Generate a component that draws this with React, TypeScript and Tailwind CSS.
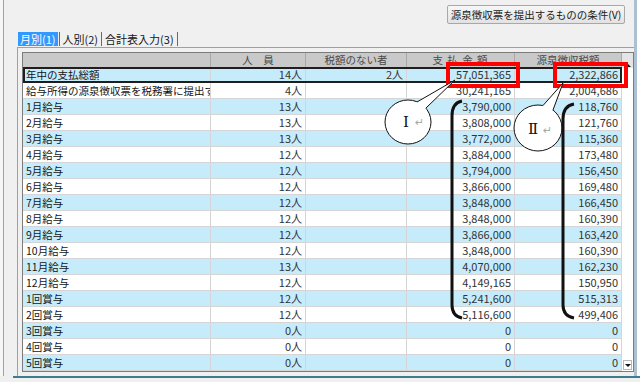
type Row = [string, string, string, string, string]

const rows: Row[] = [
  ["年中の支払総額", "14人", "2人", "57,051,365", "2,322,866"],
  ["給与所得の源泉徴収票を税務署に提出する者", "4人", "", "30,241,165", "2,004,686"],
  ["1月給与", "13人", "", "3,790,000", "118,760"],
  ["2月給与", "13人", "", "3,808,000", "121,760"],
  ["3月給与", "13人", "", "3,772,000", "115,360"],
  ["4月給与", "12人", "", "3,884,000", "173,480"],
  ["5月給与", "12人", "", "3,794,000", "156,450"],
  ["6月給与", "12人", "", "3,866,000", "169,480"],
  ["7月給与", "12人", "", "3,848,000", "166,450"],
  ["8月給与", "12人", "", "3,848,000", "160,390"],
  ["9月給与", "12人", "", "3,866,000", "163,420"],
  ["10月給与", "12人", "", "3,848,000", "160,390"],
  ["11月給与", "13人", "", "4,070,000", "162,230"],
  ["12月給与", "12人", "", "4,149,165", "150,950"],
  ["1回賞与", "12人", "", "5,241,600", "515,313"],
  ["2回賞与", "12人", "", "5,116,600", "499,406"],
  ["3回賞与", "0人", "", "0", "0"],
  ["4回賞与", "0人", "", "0", "0"],
  ["5回賞与", "0人", "", "0", "0"],
]

function HeaderRow() {
  const cell = "shrink-0 h-full border-r border-[#a9a9a9] text-center text-[10.5px] leading-[14px] text-[#4a4a4a]"
  return (
    <div className="flex h-[14px] bg-[#c9c9c9]">
      <div className={`${cell} w-[188px]`} />
      <div className={`${cell} w-[95px]`}>人　員</div>
      <div className={`${cell} w-[101px]`}>税額のない者</div>
      <div className={`${cell} w-[108px] tracking-[1px]`}>支 払 金 額</div>
      <div className={`${cell} w-[107px]`}>源泉徴収税額</div>
    </div>
  )
}

function DataRow({ row, index }: { row: Row; index: number }) {
  const [label, people, noTax, paid, tax] = row
  const num = "shrink-0 h-full border-r border-[#d5d5d5] text-right pr-[3px] text-[11px] leading-[15px] text-[#333]"
  return (
    <div
      className={`flex h-[16px] border-b border-[#d5d5d5] ${index % 2 === 0 ? "bg-[#c6ecfc]" : "bg-white"} ${
        index === 0 ? "outline-2 -outline-offset-2 outline-[#1e1e1e]" : ""
      }`}
    >
      <div className="w-[188px] shrink-0 h-full border-r border-[#d5d5d5] pl-[3px] overflow-hidden whitespace-nowrap text-[10.5px] leading-[15px] text-[#161616]">
        {label}
      </div>
      <div className={`${num} w-[95px]`}>{people}</div>
      <div className={`${num} w-[101px]`}>{noTax}</div>
      <div className={`${num} w-[108px]`}>{paid}</div>
      <div className={`${num} w-[107px]`}>{tax}</div>
    </div>
  )
}

function Annotations() {
  return (
    <svg className="absolute left-0 top-0 pointer-events-none" width="640" height="382" viewBox="0 0 640 382">
      <rect x="448" y="64" width="70" height="22" fill="none" stroke="#ff0000" strokeWidth="4" />
      <rect x="555" y="64" width="71" height="22" fill="none" stroke="#ff0000" strokeWidth="4" />

      <ellipse cx="408" cy="122" rx="23" ry="22" fill="white" stroke="#111" strokeWidth="1" />
      <path d="M417 102 L455 80 L426 108 L415 112 Z" fill="white" />
      <path d="M417 102 L455 80 L426 108" fill="none" stroke="#111" strokeWidth="1" />
      <text x="403" y="127" fontFamily="'DejaVu Serif', 'Liberation Serif', serif" fontSize="15" fill="#111">
        Ⅰ
      </text>
      <text x="415" y="126" fontFamily="'DejaVu Sans', sans-serif" fontSize="11" fill="#a8a8a8">
        ↵
      </text>

      <ellipse cx="538" cy="128" rx="24" ry="23" fill="white" stroke="#111" strokeWidth="1" />
      <path d="M543 105.5 L563 83 L553 110 L545 115 Z" fill="white" />
      <path d="M543 105.5 L563 83 L553 110" fill="none" stroke="#111" strokeWidth="1" />
      <text x="528" y="134" fontFamily="'DejaVu Serif', 'Liberation Serif', serif" fontSize="15" fill="#111">
        Ⅱ
      </text>
      <text x="543" y="134" fontFamily="'DejaVu Sans', sans-serif" fontSize="11" fill="#a8a8a8">
        ↵
      </text>

      <path d="M462 101 Q452 103 452 116 L452 305 Q452 316 462 318" fill="none" stroke="#111" strokeWidth="3" />
      <path d="M574 104 Q563 106 563 119 L563 305 Q563 316 574 318" fill="none" stroke="#111" strokeWidth="3" />
    </svg>
  )
}

export default function App() {
  return (
    <div className="relative w-[640px] h-[382px] overflow-hidden bg-[#f0f0f0] font-['Noto_Sans_CJK_JP','Noto_Sans',sans-serif] text-[#161616]">
      <div className="flex h-[376px]">
        <div className="w-[3px] shrink-0 bg-[#f6f6f6]" />
        <div className="flex-1 flex flex-col border-l border-[#a3a3a3] border-r-[3px] border-r-[#abc0d0]">
          {/* top toolbar */}
          <div className="h-[31px] shrink-0 flex justify-end items-start pt-[5px] pr-[9px]">
            <button className="w-[178px] h-[19px] border border-[#a8a8a8] rounded-[2px] bg-gradient-to-b from-[#f7f7f7] to-[#e2e2e2] text-[10.5px] leading-[17px] text-[#222] whitespace-nowrap">
              源泉徴収票を提出するものの条件(V)
            </button>
          </div>

          {/* tabs */}
          <div className="h-[16px] shrink-0 flex items-start pl-[14px] pt-[1px] text-[11px] leading-[14px]">
            <div className="h-[14px] px-[2px] bg-[#3399ff] text-white">月別(1)</div>
            <div className="w-px h-[14px] bg-[#6a6a6a] ml-[1px]" />
            <div className="h-[14px] px-[3px]">人別(2)</div>
            <div className="w-px h-[14px] bg-[#6a6a6a]" />
            <div className="h-[14px] px-[3px]">合計表入力(3)</div>
            <div className="w-px h-[14px] bg-[#6a6a6a]" />
          </div>

          {/* panel */}
          <div className="flex-1 ml-[13px] border-l border-t border-[#a0a0a0] pl-[4px] pt-[4px]">
            <div className="flex h-[320px] border border-[#7c7c7c] bg-white">
              <div className="flex flex-col">
                <HeaderRow />
                {rows.map((row, i) => (
                  <DataRow key={row[0]} row={row} index={i} />
                ))}
              </div>
              {/* scrollbar */}
              <div className="flex-1 flex flex-col bg-white">
                <div className="h-[15px] bg-[#e4e4e4] flex items-end justify-center pb-[1px]">
                  <div className="w-0 h-0 border-l-[3px] border-r-[3px] border-b-[3px] border-l-transparent border-r-transparent border-b-[#111]" />
                </div>
                <div className="flex-1" />
                <div className="h-[10px] mb-[1px] mx-[1px] border border-[#b8b8b8] flex items-center justify-center">
                  <div className="w-0 h-0 border-l-[3px] border-r-[3px] border-t-[3px] border-l-transparent border-r-transparent border-t-[#111]" />
                </div>
              </div>
            </div>
          </div>
        </div>
        <div className="w-[3px] shrink-0 bg-white" />
      </div>
      <div className="h-[2px] ml-[13px] bg-[#3e7d90]" />
      <div className="h-[4px] bg-[#f0f0f0]" />

      <Annotations />
    </div>
  )
}
